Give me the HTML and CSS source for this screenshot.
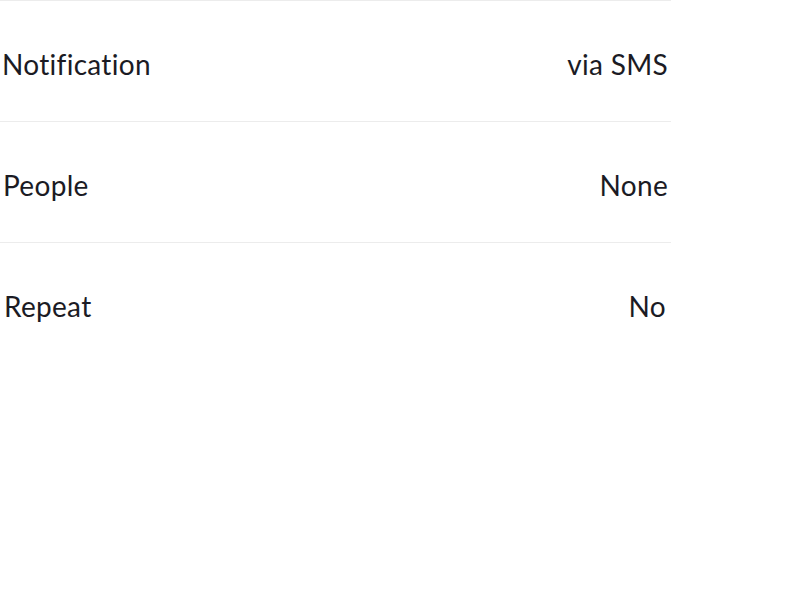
FILE: index.html
```html
<!DOCTYPE html>
<html>
<head>
<meta charset="utf-8">
<link rel="stylesheet" href="styles.css">
</head>
<body>
<div class="list">
  <div class="row"><span class="label">Notification</span><span class="value">via SMS</span></div>
  <div class="row row-2"><span class="label">People</span><span class="value">None</span></div>
  <div class="row row-3"><span class="label">Repeat</span><span class="value">No</span></div>
</div>
</body>
</html>
```

FILE: styles.css
```css
html, body {
  margin: 0;
  padding: 0;
  background: #ffffff;
}
.list {
  width: 671px;
  border-top: 1px solid #ececec;
  font-family: "Lato", "Noto Sans", sans-serif;
  font-size: 28px;
  letter-spacing: 0.3px;
  font-variant-ligatures: none;
  color: #1b1b24;
}
.row {
  height: 120px;
  box-sizing: border-box;
  padding: 5px 3px 0 2px;
  display: flex;
  justify-content: space-between;
  align-items: center;
}
.row + .row {
  border-top: 1px solid #ececec;
  height: 121px;
}
.row-2 {
  padding-left: 3px;
}
.row-3 {
  padding-left: 4px;
  padding-right: 5px;
}
```
